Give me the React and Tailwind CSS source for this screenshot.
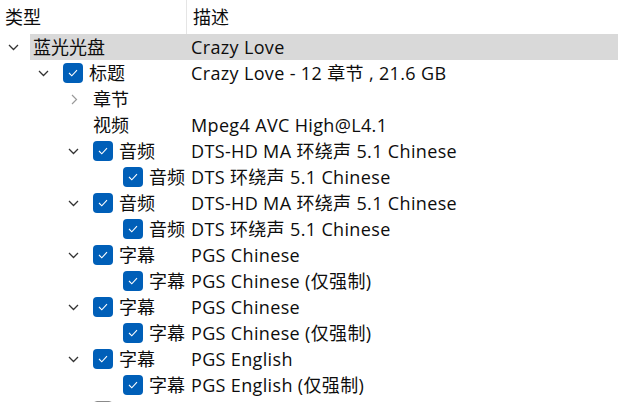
const rows = [
  { level: 0, chev: 'down', label: '蓝光光盘', desc: 'Crazy Love', selected: true },
  { level: 1, chev: 'down', check: true, label: '标题', desc: 'Crazy Love - 12 章节 , 21.6 GB' },
  { level: 2, chev: 'right', label: '章节', desc: '' },
  { level: 2, label: '视频', desc: 'Mpeg4 AVC High@L4.1' },
  { level: 2, chev: 'down', check: true, label: '音频', desc: 'DTS-HD MA 环绕声 5.1 Chinese' },
  { level: 3, check: true, label: '音频', desc: 'DTS 环绕声 5.1 Chinese' },
  { level: 2, chev: 'down', check: true, label: '音频', desc: 'DTS-HD MA 环绕声 5.1 Chinese' },
  { level: 3, check: true, label: '音频', desc: 'DTS 环绕声 5.1 Chinese' },
  { level: 2, chev: 'down', check: true, label: '字幕', desc: 'PGS Chinese' },
  { level: 3, check: true, label: '字幕', desc: 'PGS Chinese (仅强制)' },
  { level: 2, chev: 'down', check: true, label: '字幕', desc: 'PGS Chinese' },
  { level: 3, check: true, label: '字幕', desc: 'PGS Chinese (仅强制)' },
  { level: 2, chev: 'down', check: true, label: '字幕', desc: 'PGS English' },
  { level: 3, check: true, label: '字幕', desc: 'PGS English (仅强制)' },
  // only the top edge of this row's checkbox shows at the bottom
  { level: 2, chev: 'down', check: false, label: '', desc: '' },
]

const indent = ['w-0', 'w-[30px]', 'w-[60px]', 'w-[90px]']

function Chevron({ dir }) {
  if (dir === 'down')
    return (
      <svg width="11" height="7" viewBox="0 0 11 7" className="ml-[8px]">
        <path d="M1 1 L5.5 5.5 L10 1" fill="none" stroke="#333" strokeWidth="1.3" />
      </svg>
    )
  if (dir === 'right')
    return (
      <svg width="7" height="11" viewBox="0 0 7 11" className="ml-[11px]">
        <path d="M1 1 L5.5 5.5 L1 10" fill="none" stroke="#9a9a9a" strokeWidth="1.2" />
      </svg>
    )
  return null
}

function Checkbox({ checked }) {
  if (!checked)
    return <div className="w-[20px] h-[20px] shrink-0 rounded-[4px] border border-[#8a8a8a] bg-white" />
  return (
    <div className="w-[20px] h-[20px] shrink-0 rounded-[4px] bg-[#005fb8] flex items-center justify-center">
      <svg width="10" height="8" viewBox="0 0 10 8">
        <path d="M1 4 L3.8 6.8 L9 1.2" fill="none" stroke="white" strokeWidth="1.1" />
      </svg>
    </div>
  )
}

function Row({ row }) {
  return (
    <div className="flex h-[26px] items-center">
      <div className={`${indent[row.level]} shrink-0`} />
      <div className="w-[30px] h-full shrink-0 flex items-center">
        <Chevron dir={row.chev} />
      </div>
      <div className={`flex-1 h-full flex items-center ${row.selected ? 'bg-[#d9d9d9]' : ''}`}>
        <div className="h-full flex items-center pl-[3px]" style={{ width: 157 - row.level * 30 }}>
          {row.check !== undefined && <Checkbox checked={row.check} />}
          {row.label && <span className={row.check !== undefined ? 'ml-[6px]' : ''}>{row.label}</span>}
        </div>
        <div className="pl-[4px] whitespace-pre tracking-[0.35px]">{row.desc}</div>
      </div>
    </div>
  )
}

export default function App() {
  return (
    <div
      className="w-[618px] h-[402px] overflow-hidden bg-white text-[18px] text-[#0d0d0d]"
      style={{ fontFamily: '"Open Sans", "Noto Sans CJK SC", sans-serif' }}
    >
      <div className="flex h-[34px]">
        <div className="w-[187px] border-r border-[#e5e5e5] pl-[5px] flex items-center">类型</div>
        <div className="pl-[6px] flex items-center">描述</div>
      </div>
      {rows.map((r, i) => (
        <Row key={i} row={r} />
      ))}
    </div>
  )
}
